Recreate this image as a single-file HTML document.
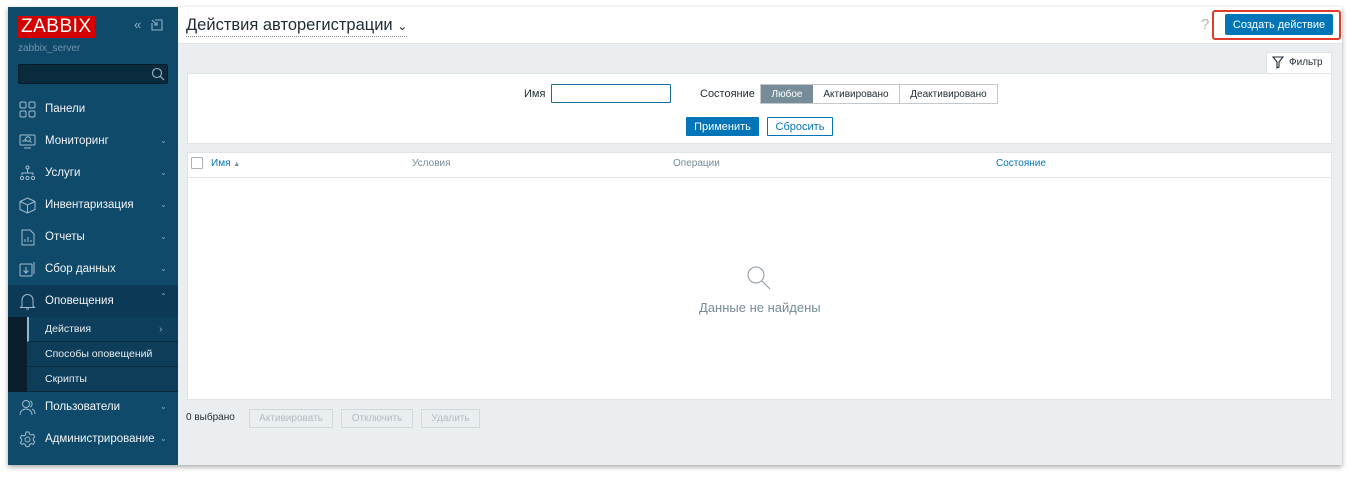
<!DOCTYPE html>
<html><head><meta charset="utf-8"><style>
*{box-sizing:border-box;margin:0;padding:0}
body{width:1355px;height:480px;background:#fff;font-family:"Liberation Sans",sans-serif;position:relative;overflow:hidden;font-size:11px;color:#1f2c33}
.a{position:absolute}
#frame{left:8px;top:7px;width:1334px;height:458px;background:#ebeef0;box-shadow:0 2px 5px rgba(0,0,0,.35)}
#side{left:8px;top:7px;width:170px;height:458px;background:#0f4a6b;color:#fff}
.mi{position:absolute;left:0;width:170px;height:32px;font-size:11.5px;line-height:32px;color:#f2f5f7}
.mi span.t{position:absolute;left:37px}
.mi .ch{position:absolute;left:152px;top:0;font-size:8px;color:#8fa9b8}
.ic{position:absolute;left:11px;top:8px;width:17px;height:17px}
.sub{position:absolute;left:19px;width:151px;height:25px;line-height:25px;font-size:10.5px;color:#e6edf1;padding-left:18px;background:#0d3d59;border-bottom:1px solid #082a3e}
.btn{display:flex;align-items:center;justify-content:center}
</style></head><body>
<div class="a" id="frame"></div>
<div class="a" id="side">
 <div class="a" style="left:10px;top:9px;background:#d40000;color:#fff;font-size:19px;line-height:22px;padding:0 3px;letter-spacing:.5px">ZABBIX</div>
 <div class="a" style="left:126px;top:10px;color:#8fb1c6;font-size:13px">&laquo;</div>
 <svg class="a" style="left:143px;top:12px" width="12" height="12" viewBox="0 0 12 12" fill="none" stroke="#8fb1c6" stroke-width="1.1"><path d="M4 1H11V11H1V4M1 1L6 6M6 3V6H3"/></svg>
 <div class="a" style="left:10px;top:36px;color:#6f95ad;font-size:10px">zabbix_server</div>
 <div class="a" style="left:10px;top:57px;width:150px;height:20px;background:#0a2a3d;border:1px solid #061c29;border-radius:2px"></div>
 <svg class="a" style="left:143px;top:60px" width="14" height="14" viewBox="0 0 14 14" fill="none" stroke="#9bb4c4" stroke-width="1.1"><circle cx="6" cy="6" r="4.5"/><path d="M9.3 9.3L13 13"/></svg>
 <div class="mi" style="top:86px"><svg class="ic" viewBox="0 0 17 17" fill="none" stroke="#9fbccc"><rect x="1" y="1" width="6" height="6" rx="1.5"/><rect x="10" y="1" width="6" height="6" rx="1.5"/><rect x="1" y="10" width="6" height="6" rx="1.5"/><rect x="10" y="10" width="6" height="6" rx="1.5"/></svg><span class="t">Панели</span></div>
 <div class="mi" style="top:118px"><svg class="ic" viewBox="0 0 17 17" fill="none" stroke="#9fbccc"><rect x="1" y="2" width="15" height="10" rx="1"/><circle cx="9" cy="6" r="2.3"/><path d="M10.6 7.6L12.5 9.5M4 9V7M6 9V6M5 15h7"/></svg><span class="t">Мониторинг</span><span class="ch">&#8964;</span></div>
 <div class="mi" style="top:150px"><svg class="ic" viewBox="0 0 17 17" fill="none" stroke="#9fbccc"><circle cx="8.5" cy="2.5" r="1.5"/><path d="M8.5 4v4M3 10V8h11v2"/><circle cx="3" cy="13" r="1.6"/><circle cx="8.5" cy="13" r="1.6"/><circle cx="14" cy="13" r="1.6"/></svg><span class="t">Услуги</span><span class="ch">&#8964;</span></div>
 <div class="mi" style="top:182px"><svg class="ic" viewBox="0 0 17 17" fill="none" stroke="#9fbccc"><path d="M8.5 1L16 4.5V12.5L8.5 16L1 12.5V4.5ZM1 4.5L8.5 8L16 4.5M8.5 8V16"/></svg><span class="t">Инвентаризация</span><span class="ch">&#8964;</span></div>
 <div class="mi" style="top:214px"><svg class="ic" viewBox="0 0 17 17" fill="none" stroke="#9fbccc"><path d="M3 1h8l4 4v11H3ZM6 13v-3M9 13V8M12 13v-2"/></svg><span class="t">Отчеты</span><span class="ch">&#8964;</span></div>
 <div class="mi" style="top:246px"><svg class="ic" viewBox="0 0 17 17" fill="none" stroke="#9fbccc"><rect x="1" y="3" width="12" height="12" rx="1"/><path d="M15 1v12M7 6v6M4.5 9.5L7 12L9.5 9.5"/></svg><span class="t">Сбор данных</span><span class="ch">&#8964;</span></div>
 <div class="mi" style="top:278px;background:#0b3956"><svg class="ic" viewBox="0 0 17 17" fill="none" stroke="#9fbccc"><path d="M3 13V7a5.5 5.5 0 0 1 11 0v6l1.5 1.5h-14ZM7 16h3"/></svg><span class="t">Оповещения</span><span class="ch" style="top:-4px">&#8963;</span></div>
 <div class="a" style="left:0;top:310px;width:19px;height:75px;background:#091f2e"></div>
 <div class="sub" style="top:310px;border-left:2px solid #8fb8d6;padding-left:16px;background:#0e405e">Действия<span style="position:absolute;left:130px;color:#8fa9b8">&rsaquo;</span></div>
 <div class="sub" style="top:335px">Способы оповещений</div>
 <div class="sub" style="top:360px">Скрипты</div>
 <div class="mi" style="top:384px"><svg class="ic" viewBox="0 0 17 17" fill="none" stroke="#9fbccc"><circle cx="7" cy="5" r="3.5"/><path d="M1 16c0-4 3-6 6-6s6 2 6 6M11 1.8a3.5 3.5 0 0 1 0 6.4M13 10c2 .8 3 3 3 5"/></svg><span class="t">Пользователи</span><span class="ch">&#8964;</span></div>
 <div class="mi" style="top:416px"><svg class="ic" viewBox="0 0 17 17" fill="none" stroke="#9fbccc"><circle cx="8.5" cy="8.5" r="2.5"/><path d="M7 1h3l.5 2 1.8 1 2-.7 1.5 2.6-1.5 1.4v2l1.5 1.4-1.5 2.6-2-.7-1.8 1-.5 2H7l-.5-2-1.8-1-2 .7L1.2 11.6 2.7 10.2v-2L1.2 6.8 2.7 4.2l2 .7 1.8-1Z"/></svg><span class="t">Администрирование</span><span class="ch">&#8964;</span></div>
</div>
<div class="a" style="left:178px;top:7px;width:1164px;height:37px;background:#fff;border-bottom:1px solid #dfe4e7"></div>
<div class="a" style="left:186px;top:15px;font-size:16.5px;color:#1f2c33;border-bottom:1px dotted #888;line-height:20px">Действия авторегистрации <span style="font-size:12px">&#8964;</span></div>
<div class="a" style="left:1201px;top:16px;color:#b0b8bd;font-size:15px">?</div>
<div class="a" style="left:1212px;top:10px;width:129px;height:30px;border:2px solid #e23b2b;border-radius:3px"></div>
<div class="a btn" style="left:1225px;top:14px;width:108px;height:21px;background:#0275b8;border-radius:2px;color:#fff;font-size:11px">Создать действие</div>
<div class="a" style="left:1266px;top:52px;width:66px;height:22px;background:#fff;border:1px solid #dfe4e7;border-bottom:none;font-size:10px;line-height:20px;padding-left:22px">Фильтр</div>
<svg class="a" style="left:1272px;top:56px" width="12" height="13" viewBox="0 0 12 13" fill="none" stroke="#1f2c33" stroke-width="1.1"><path d="M1 1h10L7 6v5L5 12V6Z"/></svg>
<div class="a" style="left:187px;top:73px;width:1145px;height:71px;background:#fff;border:1px solid #dfe4e7"></div>
<div class="a" style="left:524px;top:88px;font-size:11px">Имя</div>
<div class="a" style="left:551px;top:84px;width:120px;height:19px;border:1px solid #1a6e9e;border-radius:1px"></div>
<div class="a" style="left:700px;top:88px;font-size:11px">Состояние</div>
<div class="a" style="left:760px;top:84px;width:238px;height:20px;border:1px solid #c2c8cc;display:flex;font-size:10px">
 <div class="btn" style="width:52px;background:#768d99;color:#fff">Любое</div><div class="btn" style="width:87px;border-right:1px solid #c2c8cc">Активировано</div><div class="btn" style="flex:1">Деактивировано</div></div>
<div class="a btn" style="left:686px;top:117px;width:73px;height:19px;background:#0275b8;color:#fff;font-size:11px;border-radius:1px">Применить</div>
<div class="a btn" style="left:767px;top:117px;width:66px;height:19px;border:1px solid #0275b8;color:#0275b8;font-size:11px;border-radius:1px">Сбросить</div>
<div class="a" style="left:187px;top:152px;width:1145px;height:248px;background:#fff;border:1px solid #dfe4e7"></div>
<div class="a" style="left:187px;top:177px;width:1145px;height:1px;background:#dfe4e7"></div>
<div class="a" style="left:191px;top:157px;width:12px;height:12px;border:1px solid #aab3b8;border-radius:1px"></div>
<div class="a" style="left:211px;top:158px;color:#0275b8;font-size:10px">Имя <span style="font-size:7px;color:#758c99">&#9650;</span></div>
<div class="a" style="left:412px;top:158px;color:#758c99;font-size:10px">Условия</div>
<div class="a" style="left:673px;top:158px;color:#758c99;font-size:10px">Операции</div>
<div class="a" style="left:996px;top:158px;color:#0275b8;font-size:10px">Состояние</div>
<svg class="a" style="left:745px;top:264px" width="28" height="28" viewBox="0 0 28 28" fill="none" stroke="#8a979e" stroke-width="1"><circle cx="11" cy="11" r="8"/><path d="M17 17l8 8"/></svg>
<div class="a" style="left:699px;top:300px;color:#768d99;font-size:13px">Данные не найдены</div>
<div class="a" style="left:186px;top:412px;font-size:10px;color:#1f2c33">0 выбрано</div>
<div class="a btn" style="left:249px;top:409px;width:84px;height:19px;border:1px solid #d3d8db;color:#b3bcc1;font-size:10px">Активировать</div>
<div class="a btn" style="left:341px;top:409px;width:72px;height:19px;border:1px solid #d3d8db;color:#b3bcc1;font-size:10px">Отключить</div>
<div class="a btn" style="left:421px;top:409px;width:59px;height:19px;border:1px solid #d3d8db;color:#b3bcc1;font-size:10px">Удалить</div>
</body></html>
